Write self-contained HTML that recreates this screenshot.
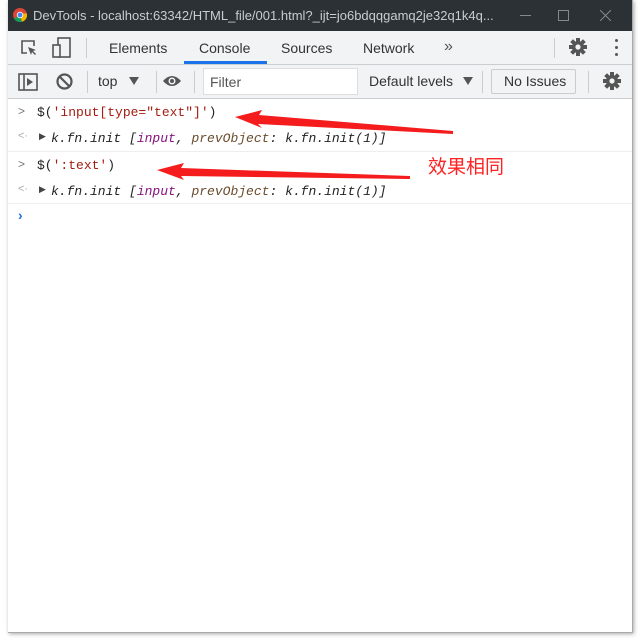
<!DOCTYPE html>
<html><head><style>
body{margin:0;width:640px;height:640px;background:#fff;position:relative;overflow:hidden;font-family:"Liberation Sans",sans-serif;}
#win{position:absolute;left:8px;top:0;width:624px;height:632px;background:#fff;box-shadow:1px 1px 4px rgba(0,0,0,.35);border-right:1px solid #aaa;border-bottom:1px solid #aaa;}
#title{height:31px;background:#2b3134;color:#c8cdd0;font-size:13px;position:relative;}
#title .t{position:absolute;left:25px;top:8px;}
#tabs{position:absolute;top:31px;left:0;right:0;height:33px;background:#f1f3f4;border-bottom:1px solid #cbcdd1;font-size:14px;color:#333;}
#tb{position:absolute;top:65px;left:0;right:0;height:33px;background:#f1f3f4;border-bottom:1px solid #cbcdd1;font-size:14px;color:#333;}
.a{position:absolute;}
.mono{font-family:"Liberation Mono",monospace;font-size:13px;}
.row{position:absolute;left:0;right:0;border-bottom:1px solid #eee;}
.str{color:#a31c12}
</style></head><body>
<div id="win">
<div id="title">
<svg class="a" style="left:5px;top:8px" width="14" height="14" viewBox="0 0 14 14"><circle cx="7" cy="7" r="7" fill="#db4437"/><path d="M7 7 L1 10.5 A7 7 0 0 0 9 13.8Z" fill="#0f9d58"/><path d="M7 7 L9 13.8 A7 7 0 0 0 13.9 5.5 L7 5.5Z" fill="#f4b400"/><circle cx="7" cy="7" r="3.2" fill="#fff"/><circle cx="7" cy="7" r="2.4" fill="#4285f4"/></svg>
<span class="t">DevTools - localhost:63342/HTML_file/001.html?_ijt=jo6bdqqgamq2je32q1k4q...</span>
<div class="a" style="left:512px;top:15px;width:11px;height:1px;background:#888"></div>
<div class="a" style="left:550px;top:10px;width:9px;height:9px;border:1px solid #888"></div>
<svg class="a" style="left:592px;top:10px" width="11" height="11"><path d="M0 0L11 11M11 0L0 11" stroke="#888" stroke-width="1"/></svg>
</div>
<div id="tabs">
<svg class="a" style="left:12px;top:8px" width="18" height="18" viewBox="0 0 18 18"><path d="M7 14H2V2h12v5" fill="none" stroke="#555" stroke-width="1.6"/><path d="M8 8l8 3-3 1 3 3-1 1-3-3-1 3z" fill="#555"/></svg>
<svg class="a" style="left:44px;top:6px" width="20" height="22" viewBox="0 0 20 22"><rect x="6" y="1" width="12" height="19" fill="none" stroke="#555" stroke-width="1.6"/><rect x="1" y="8" width="7" height="12" fill="#f1f3f4" stroke="#555" stroke-width="1.6"/></svg>
<div class="a" style="left:78px;top:7px;width:1px;height:20px;background:#ccc"></div>
<span class="a" style="left:101px;top:9px">Elements</span>
<span class="a" style="left:191px;top:9px">Console</span>
<div class="a" style="left:176px;top:30px;width:83px;height:3px;background:#1a73e8"></div>
<span class="a" style="left:273px;top:9px">Sources</span>
<span class="a" style="left:355px;top:9px">Network</span>
<span class="a" style="left:436px;top:7px;font-size:16px;color:#555">»</span>
<div class="a" style="left:546px;top:7px;width:1px;height:20px;background:#ccc"></div>
<svg class="a" style="left:561px;top:7px" width="18" height="18" viewBox="0 0 18 18"><g fill="#555"><circle cx="9" cy="9" r="6"/><rect x="7" y="0" width="4" height="18"/><rect x="0" y="7" width="18" height="4"/><rect x="7" y="0" width="4" height="18" transform="rotate(45 9 9)"/><rect x="7" y="0" width="4" height="18" transform="rotate(-45 9 9)"/></g><circle cx="9" cy="9" r="2.6" fill="#f1f3f4"/></svg>
<div class="a" style="left:607px;top:8px;width:3px;height:3px;border-radius:2px;background:#555"></div>
<div class="a" style="left:607px;top:15px;width:3px;height:3px;border-radius:2px;background:#555"></div>
<div class="a" style="left:607px;top:22px;width:3px;height:3px;border-radius:2px;background:#555"></div>
</div>
<div id="tb">
<svg class="a" style="left:10px;top:8px" width="20" height="18" viewBox="0 0 20 18"><rect x="1" y="1" width="18" height="16" fill="none" stroke="#555" stroke-width="1.6"/><line x1="6" y1="1" x2="6" y2="17" stroke="#555" stroke-width="1.6"/><path d="M9 5l6 4-6 4z" fill="#555"/></svg>
<svg class="a" style="left:48px;top:8px" width="17" height="17" viewBox="0 0 17 17"><circle cx="8.5" cy="8.5" r="7" fill="none" stroke="#555" stroke-width="2.2"/><line x1="3.5" y1="3.5" x2="13.5" y2="13.5" stroke="#555" stroke-width="2.2"/></svg>
<div class="a" style="left:79px;top:6px;width:1px;height:22px;background:#ccc"></div>
<span class="a" style="left:90px;top:8px">top</span>
<svg class="a" style="left:121px;top:12px" width="10" height="8"><path d="M0 0H10L5 8Z" fill="#555"/></svg>
<div class="a" style="left:148px;top:6px;width:1px;height:22px;background:#ccc"></div>
<svg class="a" style="left:154px;top:9px" width="20" height="14" viewBox="0 0 20 14"><path d="M1 7Q10-3 19 7Q10 17 1 7Z" fill="#555"/><circle cx="10" cy="7" r="3.5" fill="#f1f3f4"/><circle cx="10" cy="7" r="2" fill="#555"/></svg>
<div class="a" style="left:186px;top:6px;width:1px;height:22px;background:#ccc"></div>
<div class="a" style="left:195px;top:3px;width:153px;height:25px;background:#fff;border:1px solid #ddd"></div>
<span class="a" style="left:202px;top:9px;color:#555">Filter</span>
<span class="a" style="left:361px;top:8px">Default levels</span>
<svg class="a" style="left:455px;top:12px" width="10" height="8"><path d="M0 0H10L5 8Z" fill="#555"/></svg>
<div class="a" style="left:474px;top:6px;width:1px;height:22px;background:#ccc"></div>
<div class="a" style="left:483px;top:4px;width:83px;height:23px;border:1px solid #ccc;border-radius:2px;background:#f1f3f4"></div>
<span class="a" style="left:496px;top:8px">No Issues</span>
<div class="a" style="left:580px;top:6px;width:1px;height:22px;background:#ccc"></div>
<svg class="a" style="left:595px;top:7px" width="18" height="18" viewBox="0 0 18 18"><g fill="#555"><circle cx="9" cy="9" r="6"/><rect x="7" y="0" width="4" height="18"/><rect x="0" y="7" width="18" height="4"/><rect x="7" y="0" width="4" height="18" transform="rotate(45 9 9)"/><rect x="7" y="0" width="4" height="18" transform="rotate(-45 9 9)"/></g><circle cx="9" cy="9" r="2.6" fill="#f1f3f4"/></svg>
</div>
<div class="row" style="top:99px;height:52px"></div>
<div class="row" style="top:152px;height:51px"></div>
<span class="a" style="left:10px;top:104px;color:#777;font-size:12px">&gt;</span>
<span class="a mono" style="left:29px;top:105px;color:#222">$(<span class="str">'input[type="text"]'</span>)</span>
<span class="a" style="left:10px;top:130px;color:#aaa;font-size:11px">&lt;·</span>
<span class="a" style="left:31px;top:131px;color:#444;font-size:9px">▶</span>
<span class="a mono" style="left:43px;top:131px;font-style:italic;color:#222">k.fn.init [<span style="color:#881280">input</span>, <span style="color:#6b4d2e">prevObject</span>: k.fn.init(1)]</span>
<span class="a" style="left:10px;top:157px;color:#777;font-size:12px">&gt;</span>
<span class="a mono" style="left:29px;top:158px;color:#222">$(<span class="str">':text'</span>)</span>
<span class="a" style="left:10px;top:183px;color:#aaa;font-size:11px">&lt;·</span>
<span class="a" style="left:31px;top:184px;color:#444;font-size:9px">▶</span>
<span class="a mono" style="left:43px;top:184px;font-style:italic;color:#222">k.fn.init [<span style="color:#881280">input</span>, <span style="color:#6b4d2e">prevObject</span>: k.fn.init(1)]</span>
<span class="a" style="left:10px;top:207px;color:#1a73e8;font-size:14px;font-weight:bold">›</span>
<span class="a" style="left:420px;top:152px;color:#f22;font-size:19px;font-family:'Liberation Sans','Noto Sans CJK SC',sans-serif">效果相同</span>
</div>
<svg class="a" style="left:0;top:0" width="640" height="640">
<polygon points="235,117 262,110 259,115 453,131 453,134 258,124 262,128" fill="#f41c1c"/>
<polygon points="157,170 184,163 181,168 410,176 410,179 181,176 184,180" fill="#f41c1c"/>
</svg>
</body></html>
